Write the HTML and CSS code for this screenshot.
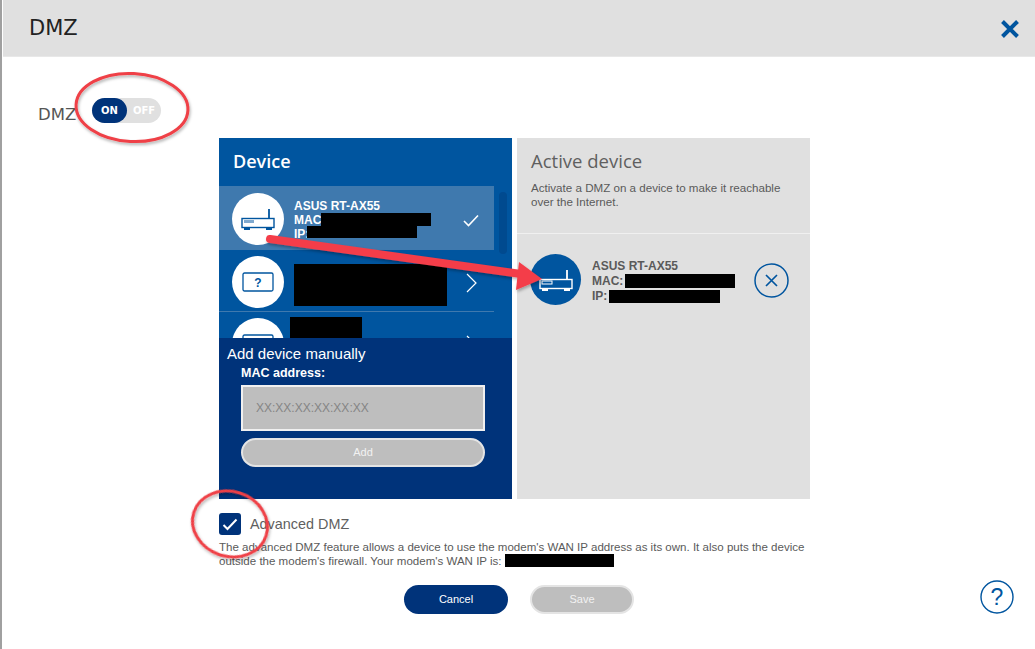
FILE: index.html
```html
<!DOCTYPE html>
<html lang="en">
<head>
<meta charset="utf-8">
<title>DMZ</title>
<link rel="stylesheet" href="styles.css">
</head>
<body>
<div class="dialog">
  <header class="head">
    <h1 class="head-title">DMZ</h1>
    <svg class="close" width="20" height="20" viewBox="0 0 20 20"><path d="M2.500 2.500L17.500 17.500M17.500 2.500L2.500 17.500" stroke="#00559f" stroke-width="4" fill="none"/></svg>
  </header>

  <div class="switch-row">
    <span class="switch-label">DMZ</span>
    <div class="toggle"><span class="toggle-on">ON</span><span class="toggle-off">OFF</span></div>
  </div>

  <div class="panels">
    <section class="device-panel">
      <h2 class="device-title">Device</h2>
      <div class="device-list">
        <div class="rows">
          <div class="row row-active">
            <span class="disc">
              <svg width="34" height="22" viewBox="0 0 34 22"><use href="#router"/></svg>
            </span>
            <div class="row-text">
              <div class="name">ASUS RT-AX55</div>
              <div class="line">MAC<span class="redact r-mac"></span></div>
              <div class="line">IP:<span class="redact r-ip"></span></div>
            </div>
            <svg class="row-mark" width="16" height="13" viewBox="0 0 16 13"><path d="M1 7L5.500 11.500L15 1.500" stroke="#fff" stroke-width="1.600" fill="none"/></svg>
          </div>
          <div class="row row-second">
            <span class="disc">
              <svg width="32" height="20" viewBox="0 0 32 20"><rect x="1" y="1" width="30" height="18" rx="1.500" fill="none" stroke="#00559f" stroke-width="1.300"/><text x="16" y="15" class="q-mark">?</text></svg>
            </span>
            <span class="redact r-second"></span>
            <svg class="row-chevron" width="11" height="20" viewBox="0 0 11 20"><path d="M1 1L10 10L1 19" stroke="#fff" stroke-width="1.200" fill="none"/></svg>
          </div>
          <div class="row row-third">
            <span class="disc">
              <svg width="32" height="20" viewBox="0 0 32 20"><rect x="1" y="1" width="30" height="18" rx="1.500" fill="none" stroke="#00559f" stroke-width="1.300"/></svg>
            </span>
            <span class="redact r-third"></span>
            <svg class="row-chevron" width="11" height="20" viewBox="0 0 11 20"><path d="M1 1L10 10L1 19" stroke="#fff" stroke-width="1.200" fill="none"/></svg>
          </div>
        </div>
        <div class="scroll-track"><div class="scroll-thumb"></div></div>
      </div>
      <div class="add-panel">
        <div class="add-title">Add device manually</div>
        <div class="add-form">
          <div class="add-label">MAC address:</div>
          <div class="add-input">XX:XX:XX:XX:XX:XX</div>
          <div class="add-btn">Add</div>
        </div>
      </div>
    </section>

    <section class="active-panel">
      <div class="active-head">
        <h2 class="active-title">Active device</h2>
        <p class="active-desc">Activate a DMZ on a device to make it reachable over the Internet.</p>
      </div>
      <div class="active-row">
        <span class="disc disc-blue">
          <svg width="34" height="22" viewBox="0 0 34 22"><use href="#router-white"/></svg>
        </span>
        <div class="active-text">
          <div>ASUS RT-AX55</div>
          <div class="active-line">MAC:<span class="redact r-amac"></span></div>
          <div class="active-line">IP:<span class="redact r-aip"></span></div>
        </div>
        <svg class="remove" width="35" height="35" viewBox="0 0 35 35"><circle cx="17.500" cy="17.500" r="16.500" fill="none" stroke="#00559f" stroke-width="1.500"/><path d="M12 12L23 23M23 12L12 23" stroke="#00559f" stroke-width="1.700" fill="none"/></svg>
      </div>
    </section>
  </div>

  <div class="advanced">
    <div class="adv-head">
      <span class="check"><svg width="16" height="13" viewBox="0 0 16 13"><path d="M1.500 7L5.500 11L14.500 1.500" stroke="#fff" stroke-width="2" fill="none"/></svg></span>
      <span class="adv-title">Advanced DMZ</span>
    </div>
    <p class="adv-desc">The advanced DMZ feature allows a device to use the modem's WAN IP address as its own. It also puts the device outside the modem's firewall. Your modem's WAN IP is: <span class="redact r-wan"></span></p>
  </div>

  <div class="footer">
    <div class="btn btn-cancel">Cancel</div>
    <div class="btn btn-save">Save</div>
    <svg class="help" width="34" height="34" viewBox="0 0 34 34"><circle cx="17" cy="17" r="16" fill="none" stroke="#00559f" stroke-width="1.400"/><text x="17" y="25" class="help-mark">?</text></svg>
  </div>
</div>

<svg class="defs" width="0" height="0">
  <defs>
    <g id="router">
      <rect x="1" y="10.500" width="32" height="9" fill="#fff" stroke="#00559f" stroke-width="1.400"/>
      <rect x="3" y="12" width="10" height="3" fill="#7fa9cf"/>
      <path d="M28 10V1" stroke="#00559f" stroke-width="1.800"/>
      <path d="M3 20h6v2h-6zM25 20h6v2h-6z" fill="#00559f"/>
    </g>
    <g id="router-white">
      <rect x="1" y="10.500" width="32" height="9" fill="none" stroke="#fff" stroke-width="1.400"/>
      <rect x="3" y="12" width="10" height="3" fill="none" stroke="#fff"/>
      <path d="M28 10V1" stroke="#fff" stroke-width="1.800"/>
      <path d="M3 20h6v2h-6zM25 20h6v2h-6z" fill="#fff"/>
    </g>
    <filter id="soft" x="-10%" y="-10%" width="120%" height="130%">
      <feDropShadow dx="1" dy="2" stdDeviation="1.500" flood-color="#000" flood-opacity="0.3"/>
    </filter>
  </defs>
</svg>

<svg class="notes" width="1035" height="649" viewBox="0 0 1035 649">
  <g filter="url(#soft)" fill="none" stroke="#ef4046" stroke-width="3">
    <ellipse cx="132" cy="107.500" rx="56" ry="34" transform="rotate(3 132 107.500)"/>
    <ellipse cx="230" cy="524" rx="38" ry="32.500" transform="rotate(18 230 524)"/>
  </g>
  <g filter="url(#soft)">
    <path d="M270 239L521 274" stroke="#f43d49" stroke-width="8" stroke-linecap="round" fill="none"/>
    <path d="M542 279L519 262L516 290Z" fill="#f43d49"/>
  </g>
</svg>
</body>
</html>
```
FILE: styles.css
```css
* { box-sizing: border-box; }
html, body { margin: 0; padding: 0; }
body {
  width: 1035px;
  height: 649px;
  overflow: hidden;
  background: #fff;
  font-family: "Liberation Sans", Arial, sans-serif;
  color: #555;
  position: relative;
}
.dialog {
  display: flex;
  flex-direction: column;
  height: 649px;
  padding-left: 1px;
  border-left: 2px solid #a0a0a0;
}
.head {
  height: 57px;
  flex: none;
  background: #e0e0e0;
  border-bottom: 1px solid #e8e8e8;
  display: flex;
  align-items: center;
  justify-content: space-between;
  padding: 0 13px 0 26px;
}
.head-title {
  margin: 0;
  font: 400 21px "DejaVu Sans", sans-serif;
  color: #222;
}
.close { display: block; margin-top: 1px; margin-right: 2px; }

.switch-row {
  height: 81px;
  flex: none;
  display: flex;
  align-items: flex-start;
  padding: 41px 0 0 35px;
}
.switch-label {
  font: 400 16.500px/34px "DejaVu Sans", sans-serif;
  color: #555;
  width: 54px;
}
.toggle {
  width: 69px;
  height: 25px;
  border-radius: 13px;
  background: #e0e0e0;
  display: flex;
  font: 700 10px/25px "DejaVu Sans", sans-serif;
  color: #fff;
  text-align: center;
}
.toggle-on { width: 35px; background: #00337a; border-radius: 13px; }
.toggle-off { flex: 1; }

.panels {
  display: flex;
  gap: 5px;
  margin-left: 216px;
  height: 361px;
  flex: none;
}
.device-panel {
  width: 293px;
  background: #00559f;
  display: flex;
  flex-direction: column;
  color: #fff;
}
.device-title {
  margin: 0;
  height: 48px;
  padding-left: 14px;
  font: 600 18px/47px "Open Sans", sans-serif;
  color: #fff;
}
.device-list { height: 152px; display: flex; overflow: hidden; flex: none; }
.rows { width: 275px; flex: none; }
.row {
  display: flex;
  align-items: center;
  padding-left: 13px;
  position: relative;
  border-top: 1px solid #3f79ae;
}
.row-active { height: 64px; background: #3f79ae; }
.row-second { height: 62px; border-top: none; border-bottom: 1px solid #3f79ae; padding-top: 2px; }
.row-third { height: 62px; border-top: none; align-items: flex-start; padding-top: 6px; }
.disc {
  width: 52px;
  height: 52px;
  border-radius: 50%;
  background: #fff;
  flex: none;
  display: flex;
  align-items: center;
  justify-content: center;
}
.disc-blue { background: #00559f; width: 51px; height: 51px; }
.row-text {
  margin: 3px 0 0 10px;
  font: 700 12px/14px "Liberation Sans", sans-serif;
  color: #fff;
  width: 160px;
  flex: none;
}
.line { display: flex; }
.redact { display: inline-block; background: #000; vertical-align: top; }
.r-mac { width: 110px; height: 13px; }
.r-ip { width: 110px; height: 12px; margin: -1px 0 0 -2px; }
.row-mark { position: absolute; left: 244px; top: 27px; }
.r-second { width: 153px; height: 42px; margin: 7px 0 0 10px; }
.r-third { width: 72px; height: 21px; margin: -1px 0 0 6px; }
.row-chevron { position: absolute; left: 247px; top: 23px; }
.scroll-track { flex: 1; padding: 6px 5px 0; }
.scroll-thumb { width: 8px; height: 62px; background: #004a8f; border-radius: 4px; }

.add-panel { flex: 1; background: #00337a; padding: 7px 0 0 8px; }
.add-title { font-size: 15px; line-height: 18px; color: #fff; }
.add-form { margin: 0 27px 0 14px; }
.add-label { font: 700 12.500px/15px "Liberation Sans", sans-serif; color: #fff; margin-top: 3px; height: 19px; }
.add-input {
  height: 46px;
  background: #bebebe;
  border: 2px solid #f0f0f0;
  padding-left: 13px;
  font-size: 12px;
  line-height: 42px;
  color: #858585;
}
.add-btn {
  height: 29px;
  margin-top: 7px;
  background: #bebebe;
  border: 2px solid #e4e4e4;
  border-radius: 15px;
  text-align: center;
  font-size: 11px;
  line-height: 25px;
  color: #f2f2f2;
}

.active-panel { width: 293px; background: #e0e0e0; }
.active-head { height: 96px; border-bottom: 1px solid #f0f0f0; padding-left: 14px; }
.active-title {
  margin: 0;
  font: 400 18.500px/46px "Open Sans", sans-serif;
  color: #5f5f5f;
}
.active-desc { margin: -3px 0 0; font-size: 11.600px; line-height: 14px; width: 265px; color: #5a5a5a; }
.active-row { display: flex; align-items: flex-start; padding: 20px 0 0 13px; }
.active-text {
  margin: 5px 0 0 11px;
  width: 162px;
  flex: none;
  font: 700 12px/15px "Liberation Sans", sans-serif;
  color: #5a5a5a;
}
.active-line { display: flex; }
.r-amac { width: 110px; height: 14px; margin-left: 2px; }
.r-aip { width: 111px; height: 13px; margin: 1px 0 0 2px; }
.remove { margin-top: 9px; display: block; }

.advanced { margin-left: 216px; width: 590px; padding-top: 14px; flex: none; }
.adv-head { display: flex; align-items: center; height: 22px; }
.check {
  width: 22px;
  height: 22px;
  background: #00337a;
  border-radius: 3px;
  display: flex;
  align-items: center;
  justify-content: center;
}
.adv-title { margin-left: 9px; font-size: 14.400px; color: #5f5f5f; }
.adv-desc { margin: 5px 0 0; font-size: 11.540px; line-height: 14px; color: #5a5a5a; }
.r-wan { width: 109px; height: 13px; }

.footer { display: flex; align-items: flex-start; padding: 17px 21px 0 401px; flex: none; }
.btn {
  width: 104px;
  height: 29px;
  border-radius: 15px;
  text-align: center;
  font-size: 11px;
  color: #fff;
}
.btn-cancel { background: #00337a; line-height: 29px; }
.btn-save { background: #bebebe; border: 2px solid #e4e4e4; line-height: 25px; margin-left: 22px; color: #f2f2f2; }
.help { margin: -5px 0 0 auto; display: block; }

.q-mark { font: 700 12px "Liberation Sans", sans-serif; fill: #00559f; text-anchor: middle; }
.help-mark { font: 400 23px "Liberation Sans", sans-serif; fill: #00559f; text-anchor: middle; }
.defs { position: absolute; }
.notes { position: absolute; left: 0; top: 0; pointer-events: none; }
```
